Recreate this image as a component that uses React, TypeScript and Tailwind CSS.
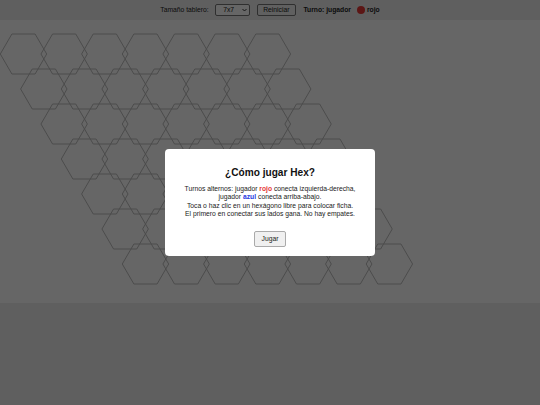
import { useState } from 'react';

const SIZE = 7;
const HEX_W = 46.4;
const HEX_H = 40;
const COL_STEP = 40.65;
const ROW_STEP = 35;
const ROW_SHIFT = 20.33;

function hexPoints(x: number, y: number) {
  const q = HEX_W / 4;
  return [
    [x + q, y],
    [x + HEX_W - q, y],
    [x + HEX_W, y + HEX_H / 2],
    [x + HEX_W - q, y + HEX_H],
    [x + q, y + HEX_H],
    [x, y + HEX_H / 2],
  ]
    .map((p) => p.map((n) => n.toFixed(2)).join(','))
    .join(' ');
}

function Board() {
  const cells = [];
  for (let r = 0; r < SIZE; r++) {
    for (let c = 0; c < SIZE; c++) {
      const x = 0.3 + c * COL_STEP + r * ROW_SHIFT;
      const y = 14 + r * ROW_STEP;
      cells.push(
        <polygon
          key={`${r}-${c}`}
          points={hexPoints(x, y)}
          fill="#ffffff"
          fillOpacity={0}
          stroke="#bdbdbd"
          strokeWidth={1}
        />
      );
    }
  }
  return (
    <div className="h-[283px] bg-white overflow-hidden">
      <svg width="540" height="283" viewBox="0 0 540 283" className="block">
        {cells}
      </svg>
    </div>
  );
}

export default function App() {
  const [size, setSize] = useState('7');
  const [showHelp, setShowHelp] = useState(true);

  return (
    <div
      className="min-h-[405px] bg-[#eeeeee] text-[#222] text-[6.75px]"
      style={{ fontFamily: '"Liberation Sans", Arial, sans-serif' }}
    >
      <div className="h-[20px] flex items-center justify-center gap-[6.5px] leading-none">
        <span>Tamaño tablero:</span>
        <div className="relative">
          <select
            value={size}
            onChange={(e) => setSize(e.target.value)}
            className="appearance-none block h-[12px] w-[35px] pl-[7px] bg-white border border-[#767676] rounded-[2px] leading-none"
          >
            <option value="5">5x5</option>
            <option value="7">7x7</option>
            <option value="9">9x9</option>
            <option value="11">11x11</option>
          </select>
          <svg
            className="absolute right-[3px] top-[4px] pointer-events-none"
            width="5"
            height="4"
            viewBox="0 0 10 6"
          >
            <path d="M1 1l4 4 4-4" fill="none" stroke="#222" strokeWidth="1.8" />
          </svg>
        </div>
        <button className="h-[12px] px-[5.5px] bg-[#efefef] border border-[#767676] rounded-[2px] leading-none">
          Reiniciar
        </button>
        <span className="flex items-center font-bold ml-[1px]">
          Turno: jugador
          <span className="inline-block w-[8px] h-[8px] rounded-full bg-[#e53935] ml-[6px] mr-[2px]" />
          rojo
        </span>
      </div>

      <Board />

      {showHelp && (
        <div className="fixed inset-0 bg-black/60 flex items-center justify-center">
          <div className="w-[210px] bg-white rounded-[4px] pt-[10px] pb-[9px] px-[8px] text-center">
            <h2 className="mt-[8.5px] text-[10.125px] leading-[11.6px] font-bold text-[#111]">
              ¿Cómo jugar Hex?
            </h2>
            <p className="mt-[6.2px] leading-[8.4px] text-[#222]">
              Turnos alternos: jugador <b className="text-[#e53935]">rojo</b> conecta izquierda-derecha,
              <br />
              jugador <b className="text-[#1e3adf]">azul</b> conecta arriba-abajo.
              <br />
              Toca o haz clic en un hexágono libre para colocar ficha.
              <br />
              El primero en conectar sus lados gana. No hay empates.
            </p>
            <div className="mt-[12.6px] flex justify-center">
              <button
                onClick={() => setShowHelp(false)}
                className="h-[16px] w-[32px] bg-[#f0f0f0] border border-[#aaaaaa] rounded-[2px] leading-none"
              >
                Jugar
              </button>
            </div>
          </div>
        </div>
      )}
    </div>
  );
}
